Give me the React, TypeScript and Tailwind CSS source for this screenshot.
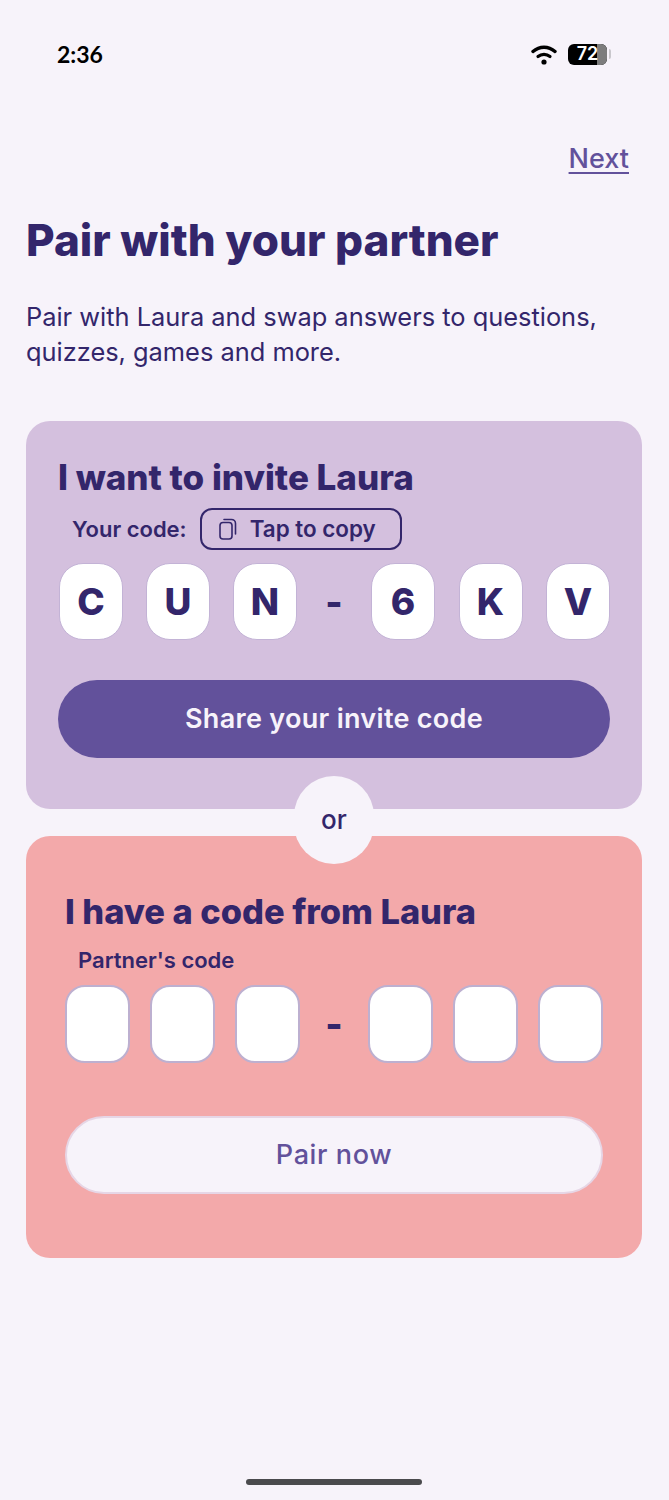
const INK = "text-[#33266b]";

function CodeBox({ value }: { value: string }) {
  return (
    <div
      className={`flex h-[77px] w-[64px] items-center justify-center rounded-[24px] border border-[#c3b3d6] bg-white font-['Inter',sans-serif] text-[37px] font-extrabold ${INK}`}
    >
      {value}
    </div>
  );
}

function EmptyBox() {
  return (
    <div className="h-[78px] w-[65px] rounded-[20px] border-2 border-[#bdb0d0] bg-white" />
  );
}

export default function App() {
  return (
    <div className="flex h-[1500px] w-[669px] flex-col bg-[#f7f3fa] font-['Inter',sans-serif]">
      {/* Status bar */}
      <div className="mt-[36px] flex h-[36px] items-center justify-between pl-[57px] pr-[58px]">
        <span className="font-['Lato',sans-serif] text-[23px] font-bold text-black">2:36</span>
        <div className="flex items-center gap-[11px]">
          <svg width="26" height="21" viewBox="0 0 26 21" fill="none">
            <path d="M2 7.5C8.5 1.8 17.5 1.8 24 7.5" stroke="black" strokeWidth="3.4" strokeLinecap="round" />
            <path d="M7 12.5C10.5 9.6 15.5 9.6 19 12.5" stroke="black" strokeWidth="3.2" strokeLinecap="round" />
            <circle cx="13" cy="18" r="2.6" fill="black" />
          </svg>
          <div className="relative flex h-[21px] w-[39px] items-center justify-center overflow-hidden rounded-[6px] bg-black">
            <div className="absolute bottom-0 right-0 top-0 w-[10px] bg-[#7d7d7d]" />
            <span className="relative text-[18px] font-semibold leading-none text-white">72</span>
          </div>
          <div className="-ml-[9px] h-[10px] w-[2px] rounded-r bg-[#c9c7cc]" />
        </div>
      </div>

      {/* Skip */}
      <div className="mt-[70px] flex justify-end pr-[40px]">
        <a className="text-[27px] font-medium leading-[34px] text-[#62519b] underline underline-offset-[4px]">Next</a>
      </div>

      <h1 className={`ml-[26px] mt-[34px] text-[44px] font-extrabold leading-[60px] ${INK}`}>
        Pair with your partner
      </h1>
      <p className={`ml-[26px] mt-[29px] w-[610px] text-[25.4px] leading-[35px] ${INK}`}>
        Pair with Laura and swap answers to questions, quizzes, games and more.
      </p>

      <div className="relative ml-[26px] mr-[27px] mt-[52px] flex flex-col gap-[27px]">
        {/* Invite card */}
        <section className="h-[388px] rounded-[24px] bg-[#d4c0de] px-[32px] pt-[34px]">
          <h2 className={`text-[35px] font-extrabold leading-[44px] ${INK}`}>I want to invite Laura</h2>
          <div className="ml-[14px] mt-[9px] flex items-center gap-[13px]">
            <span className={`text-[22px] font-semibold ${INK}`}>Your code:</span>
            <button className={`flex h-[42px] w-[202px] items-center gap-[13px] rounded-[12px] border-2 border-[#33266b] pl-[17px] text-[22.4px] font-semibold ${INK}`}>
              <svg width="18" height="22" viewBox="0 0 18 22" fill="none" stroke="#33266b" strokeWidth="1.6">
                <rect x="1" y="4.5" width="12" height="16.5" rx="3" />
                <path d="M5 1.5h7.5a4 4 0 0 1 4 4V16" strokeLinecap="round" />
              </svg>
              Tap to copy
            </button>
          </div>
          <div className="mt-[13px] flex items-center justify-between pl-px">
            <div className="flex gap-[23px]">
              <CodeBox value="C" />
              <CodeBox value="U" />
              <CodeBox value="N" />
            </div>
            <span className={`text-[37px] font-extrabold ${INK}`}>-</span>
            <div className="flex gap-[23.5px]">
              <CodeBox value="6" />
              <CodeBox value="K" />
              <CodeBox value="V" />
            </div>
          </div>
          <button className="mt-[40px] flex h-[78px] w-full items-center justify-center rounded-full bg-[#62519b] text-[27px] font-semibold tracking-[0.3px] text-[#f7f3fa]">
            Share your invite code
          </button>
        </section>

        {/* Divider bubble */}
        <div className={`absolute left-[268px] top-[355px] z-10 flex h-[88px] w-[80px] items-start justify-center rounded-full bg-[#f7f3fa] pt-[26px] text-[26px] font-medium leading-[36px] ${INK}`}>
          or
        </div>

        {/* Code entry card */}
        <section className="h-[422px] rounded-[24px] bg-[#f3a9aa] px-[39px] pt-[54px]">
          <h2 className={`text-[34.4px] font-extrabold leading-[44px] ${INK}`}>I have a code from Laura</h2>
          <div className={`ml-[13px] mt-[11px] text-[22px] font-semibold leading-[30px] ${INK}`}>Partner's code</div>
          <div className="mt-[10px] flex items-center justify-between">
            <div className="flex gap-[20px]">
              <EmptyBox />
              <EmptyBox />
              <EmptyBox />
            </div>
            <span className={`text-[37px] font-extrabold ${INK}`}>-</span>
            <div className="flex gap-[20px]">
              <EmptyBox />
              <EmptyBox />
              <EmptyBox />
            </div>
          </div>
          <button className="mt-[53px] flex h-[78px] w-full items-center justify-center rounded-full border-2 border-[#e6d6e6] bg-[#f7f3fa] text-[27px] font-medium tracking-[0.6px] text-[#62519b]">
            Pair now
          </button>
        </section>
      </div>

      {/* Home indicator */}
      <div className="mb-[15px] ml-[246px] mt-auto h-[6px] w-[176px] rounded-full bg-[#4a4a4d]" />
    </div>
  );
}
